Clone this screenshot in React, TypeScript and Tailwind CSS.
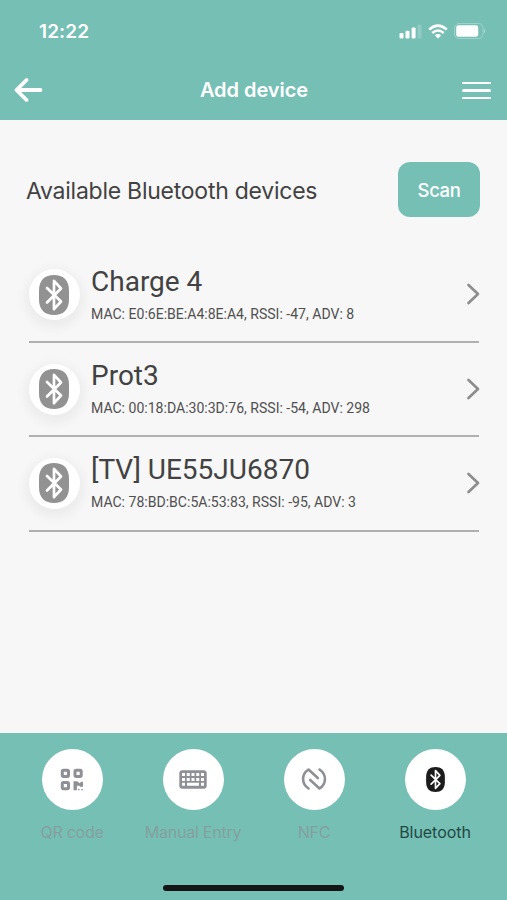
import type { ReactNode } from "react";

const devices = [
  { name: "Charge 4", mac: "E0:6E:BE:A4:8E:A4", rssi: -47, adv: 8 },
  { name: "Prot3", mac: "00:18:DA:30:3D:76", rssi: -54, adv: 298 },
  { name: "[TV] UE55JU6870", mac: "78:BD:BC:5A:53:83", rssi: -95, adv: 3 },
];

const BluetoothIcon = ({ className }: { className: string }) => (
  <svg viewBox="0 0 30 40" className={className} aria-hidden="true">
    <path d="M15 0C24 0 30 4.500 30 16V24C30 35.500 24 40 15 40S0 35.500 0 24V16C0 4.500 6 0 15 0Z" fill="currentColor" />
    <path
      d="M8 13L22 26.500L15 34.200V5.800L22 13.500L8 27.500"
      fill="none"
      stroke="white"
      strokeWidth="2.700"
      strokeLinejoin="round"
      strokeLinecap="round"
    />
  </svg>
);

const QrIcon = () => (
  <svg viewBox="0 0 24 24" className="h-6 w-6" fill="none" stroke="currentColor" strokeWidth="3" aria-hidden="true">
    <rect x="2.300" y="2.200" width="6.200" height="6.200" rx="1.200" />
    <rect x="15" y="2.200" width="6.200" height="6.200" rx="1.200" />
    <rect x="2.300" y="14.600" width="6.200" height="6.200" rx="1.200" />
    <path
      d="M13.500 13.200H17.200L19.600 15.300L21.200 13.700H23V18.800H20.400L19.200 17.700H16.900V22.300H13.500ZM18 20.900H19.500V22.300H18ZM21.300 20.900H22.800V22.300H21.300Z"
      fill="currentColor"
      stroke="none"
    />
  </svg>
);

const KeyboardIcon = () => (
  <svg viewBox="0 0 28 19" className="h-[19px] w-7" aria-hidden="true">
    <rect x="0.300" y="0.300" width="27.400" height="18.400" rx="3" fill="currentColor" />
    <path
      d="M3 3H6V6H3ZM7.750 3H10.750V6H7.750ZM12.500 3H15.500V6H12.500ZM17.250 3H20.250V6H17.250ZM22 3H25V6H22ZM3 7.900H6V10.900H3ZM7.750 7.900H10.750V10.900H7.750ZM12.500 7.900H15.500V10.900H12.500ZM17.250 7.900H20.250V10.900H17.250ZM22 7.900H25V10.900H22ZM3 12.800H6V15.800H3ZM8 12.800H20V15.800H8ZM22 12.800H25V15.800H22Z"
      fill="white"
    />
  </svg>
);

const NfcIcon = () => (
  <svg
    viewBox="0 0 26 24"
    className="-mt-[2px] h-6 w-[26px]"
    fill="none"
    stroke="currentColor"
    strokeWidth="2.600"
    strokeLinecap="round"
    strokeLinejoin="round"
    aria-hidden="true"
  >
    <path d="M7.500 21.500C0 16.500.5 7 7.500 2.500L16.800 11" />
    <path d="M18.500 2.500C26 7.500 25.500 17 18.500 21.500L9.200 13" />
  </svg>
);

const tabs: { title: string; icon: ReactNode; active?: boolean }[] = [
  { title: "QR code", icon: <QrIcon /> },
  { title: "Manual Entry", icon: <KeyboardIcon /> },
  { title: "NFC", icon: <NfcIcon /> },
  { title: "Bluetooth", icon: <BluetoothIcon className="-mt-px h-[25px] w-[19px]" />, active: true },
];

const StatusBar = () => (
  <div className="flex h-[62px] items-center justify-between pl-[39px] pr-[21px]">
    <span className="text-[19px] leading-none font-semibold tracking-[0.1px]">12:22</span>
    <div className="flex items-center gap-[6px]">
      <svg viewBox="0 0 23 15" className="h-[15px] w-[23px]" fill="currentColor" aria-hidden="true">
        <rect x="0.500" y="9" width="4" height="5.500" rx="1" />
        <rect x="6.500" y="6.700" width="4" height="7.800" rx="1" />
        <rect x="12.600" y="3.500" width="4" height="11" rx="1" />
        <rect x="18.500" y="0.500" width="4" height="14" rx="1" opacity="0.2" />
      </svg>
      <svg viewBox="0 0 20 15" className="h-[15px] w-5" fill="none" stroke="currentColor" strokeWidth="2.500" aria-hidden="true">
        <path d="M1.200 5.500Q10-2.300 18.800 5.500" />
        <path d="M4.300 9Q10 4 15.700 9" />
        <path d="M6.800 11.300Q10 8.600 13.200 11.300L10 14.600Z" fill="currentColor" stroke="none" />
      </svg>
      <svg viewBox="0 0 32 16" className="h-4 w-8" aria-hidden="true">
        <rect x="0.500" y="0.500" width="28.500" height="15" rx="4.500" fill="none" stroke="currentColor" opacity="0.3" />
        <rect x="2.200" y="2.200" width="22" height="11.600" rx="2.200" fill="currentColor" />
        <path d="M30.200 5.500Q32.200 8 30.200 10.500Z" fill="currentColor" opacity="0.5" />
      </svg>
    </div>
  </div>
);

const App = () => {
  return (
    <div className="flex h-[900px] w-[507px] flex-col overflow-hidden bg-[#f7f7f7] font-[Inter,sans-serif]">
      {/* Header */}
      <header className="h-[120px] shrink-0 bg-[#76bfb5] text-white">
        <StatusBar />
        <div className="flex h-14 items-center justify-between pl-[14px] pr-4">
          <button aria-label="Back">
            <svg viewBox="0 0 29 24" className="h-6 w-[29px]" fill="none" stroke="currentColor" strokeWidth="3.800" strokeLinecap="round" strokeLinejoin="round">
              <path d="M12.500 2L2.500 12L12.500 22M3 12H26.500" />
            </svg>
          </button>
          <h1 className="pl-[3px] text-[20px] leading-none font-semibold tracking-[-0.050px]">Add device</h1>
          <button className="flex w-[29px] flex-col gap-[5px] pt-px" aria-label="Menu">
            <span className="h-[2.300px] w-full rounded-full bg-white"></span>
            <span className="h-[2.300px] w-full rounded-full bg-white"></span>
            <span className="h-[2.300px] w-full rounded-full bg-white"></span>
          </button>
        </div>
      </header>

      <main className="flex-1 pt-[42px]">
        <div className="flex items-center justify-between pl-[26px] pr-[27px]">
          <h2 className="pt-[3px] text-[23px] leading-none tracking-[-0.250px] text-[#424242]">Available Bluetooth devices</h2>
          <button className="h-[55px] w-[82px] rounded-xl bg-[#76bfb5] pt-[3px] text-[18.500px] font-medium tracking-[-0.400px] text-white">
            Scan
          </button>
        </div>

        {/* Device list */}
        <ul className="mt-[31.500px] pl-[29px] pr-7 font-[Roboto,sans-serif]">
          {devices.map((device) => (
            <li key={device.mac} className="flex h-[94.400px] items-center border-b-2 border-[#b0b0b0]">
              <div className="flex h-[51px] w-[51px] shrink-0 items-center justify-center rounded-full bg-white pr-px shadow-[0_4px_12px_4px_rgba(0,0,0,0.050)]">
                <BluetoothIcon className="h-10 w-[30px] text-[#929292]" />
              </div>
              <div className="ml-[11px] flex-1 pb-[2px]">
                <h3 className="text-[28px] leading-[34px] text-[#424242]">{device.name}</h3>
                <p className="mt-[6px] text-[14.050px] leading-[18px] whitespace-nowrap text-[#505050]">
                  MAC: {device.mac}, RSSI: {device.rssi}, ADV: {device.adv}
                </p>
              </div>
              <svg viewBox="0 0 14 22" className="-mt-px -mr-px h-[22px] w-[14px] text-[#8e8e8e]" fill="none" stroke="currentColor" strokeWidth="2.700" strokeLinecap="round" strokeLinejoin="round" aria-hidden="true">
                <path d="M2.500 2L12 11L2.500 20" />
              </svg>
            </li>
          ))}
        </ul>
      </main>

      {/* Bottom tabs */}
      <footer className="flex h-[167px] shrink-0 flex-col items-center bg-[#76bfb5] pt-4">
        <nav className="grid w-[484px] grid-cols-4">
          {tabs.map((tab) => (
            <button
              key={tab.title}
              className={`flex flex-col items-center ${tab.active ? "text-[#1c1c1c]" : "text-[#8e9096]"}`}
            >
              <span className="flex h-[61px] w-[61px] items-center justify-center rounded-full bg-white">{tab.icon}</span>
              <span
                className={`mt-[13px] text-[16px] leading-[18px] whitespace-nowrap ${
                  tab.active ? "tracking-[-0.050px] text-[#214943]" : "tracking-[-0.250px] text-[#839fa0]"
                }`}
              >
                {tab.title}
              </span>
            </button>
          ))}
        </nav>
        <div className="mt-auto mb-[9px] h-[6px] w-[181px] rounded-full bg-[#151515]"></div>
      </footer>
    </div>
  );
};

export default App;
